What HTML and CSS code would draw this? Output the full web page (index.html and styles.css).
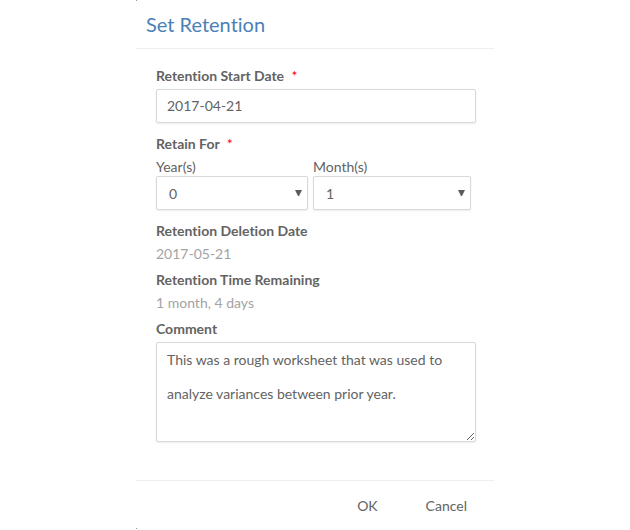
FILE: index.html
```html
<!DOCTYPE html>
<html lang="en">
<head>
<meta charset="utf-8">
<title>Set Retention</title>
<link rel="stylesheet" href="styles.css">
</head>
<body>
<form class="dialog">
  <header class="dialog-header"><h1>Set Retention</h1></header>
  <div class="dialog-body">
    <div class="field">
      <label class="title" for="start">Retention Start Date <span class="required">*</span></label>
      <input class="control" id="start" type="text" value="2017-04-21">
    </div>
    <fieldset class="field">
      <legend class="title">Retain For <span class="required">*</span></legend>
      <div class="durations">
        <div class="duration">
          <label for="years">Year(s)</label>
          <div class="select-wrap"><select class="control" id="years"><option>0</option></select><svg class="arrow" viewBox="0 0 7 6"><path d="M0 0h7L4 6H3z"/></svg></div>
        </div>
        <div class="duration">
          <label for="months">Month(s)</label>
          <div class="select-wrap"><select class="control" id="months"><option>1</option></select><svg class="arrow" viewBox="0 0 7 6"><path d="M0 0h7L4 6H3z"/></svg></div>
        </div>
      </div>
    </fieldset>
    <dl class="summary">
      <dt class="title">Retention Deletion Date</dt>
      <dd>2017-05-21</dd>
      <dt class="title">Retention Time Remaining</dt>
      <dd>1 month, 4 days</dd>
    </dl>
    <div class="comment-field">
      <label class="title" for="comment">Comment</label>
      <textarea class="control comment" id="comment">This was a rough worksheet that was used to analyze variances between prior year.</textarea>
    </div>
  </div>
  <footer class="dialog-footer">
    <button type="button">OK</button>
    <button type="button">Cancel</button>
  </footer>
</form>
</body>
</html>
```
FILE: styles.css
```css
* { box-sizing: border-box; }
body {
  margin: 0;
  background: #fff;
  color: #636363;
  font: 14px/20px Lato, sans-serif;
  font-variant-ligatures: none;
}
.dialog {
  position: relative;
  width: 100%;
  max-width: 358px;
  margin: 0 auto;
}
/* Corner ticks on the dialog's left edge */
.dialog::before,
.dialog::after {
  content: "";
  position: absolute;
  left: 0;
  width: 1px;
  height: 1px;
  background: #999;
}
.dialog::before { top: 0; }
.dialog::after { bottom: 2px; }
.dialog-header {
  padding: 10px;
  border-bottom: 1px solid #eee;
}
h1 {
  margin: 0;
  color: #4a80b8;
  font-size: 20px;
  font-weight: 400;
  line-height: 28px;
}
.dialog-body { padding: 15px 18px 38px 20px; }
.title {
  display: block;
  padding: 0;
  font-weight: 700;
  line-height: 24px;
}
.field .title,
.comment-field .title { margin-bottom: 1px; }
.required { margin-left: 4px; color: #f00; font-weight: 400; }
.field { margin: 0 0 9px; padding: 0; border: 0; }
.control {
  display: block;
  width: 100%;
  height: 34px;
  padding: 0 10px;
  border: 1px solid #d9d9d9;
  border-radius: 2px;
  background: #fff;
  box-shadow: 0 1px 2px #00000014;
  color: inherit;
  font: inherit;
  font-variant-ligatures: inherit;
}
input.control { padding-bottom: 2px; }
.durations {
  display: grid;
  grid-template-columns: 152fr 158fr;
  gap: 5px;
  padding-right: 5px;
}
.duration label { display: block; line-height: 19px; }
.select-wrap { position: relative; }
select.control { padding: 2px 12px 0; appearance: none; }
.arrow {
  position: absolute;
  top: 14px;
  right: 6px;
  width: 7px;
  height: 6px;
  fill: #5c5c5c;
  pointer-events: none;
}
.summary { margin: 0; }
.summary dd { margin: 0 0 3px; color: #a3a3a3; line-height: 22px; }
textarea.comment { height: 100px; line-height: 34px; resize: vertical; }
.dialog-footer {
  display: flex;
  justify-content: flex-end;
  gap: 48px;
  padding: 15px 27px;
  border-top: 1px solid #eee;
}
button {
  padding: 0;
  border: 0;
  background: none;
  color: inherit;
  font: inherit;
}
```
